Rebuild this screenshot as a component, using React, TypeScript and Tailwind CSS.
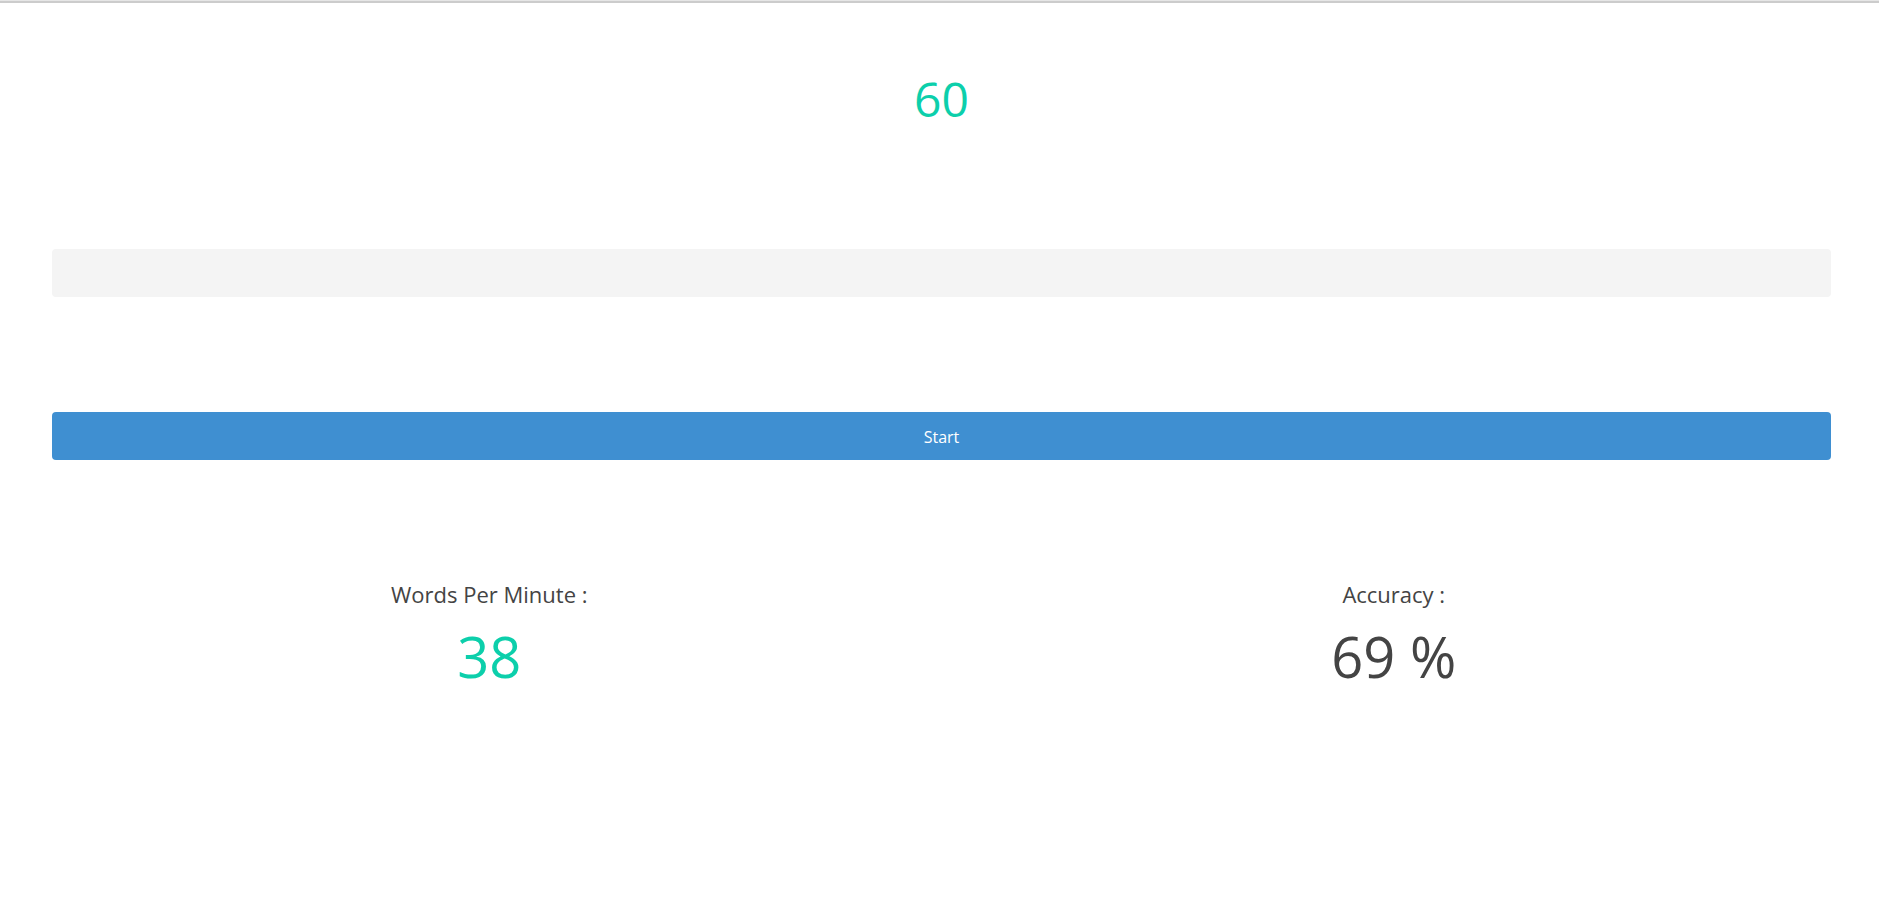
import React from 'react'

function Stat({ label, value, accent }: { label: string; value: string; accent?: boolean }) {
  return (
    <div className="flex flex-col items-center">
      <p className="text-[22px] leading-none text-[#444444]">{label}</p>
      <p className={`mt-[23px] text-[56px] leading-none ${accent ? 'text-[#0ccfab]' : 'text-[#444444]'}`}>
        {value}
      </p>
    </div>
  )
}

export default function App() {
  return (
    <div className="min-h-[901px] bg-white font-['Open_Sans',sans-serif]">
      <div className="h-[1px] bg-[#e6e6e6]" />
      <div className="h-[2px] bg-[#cccccc]" />
      <main className="pl-[52px] pr-[48px] flex flex-col">
        <p className="mt-[72px] text-center text-[48px] leading-none text-[#0ccfab]">60</p>
        <input
          className="mt-[126px] h-[48px] w-full rounded bg-[#f4f4f4] px-4 outline-none"
          type="text"
        />
        <button className="mt-[115px] h-[48px] w-full rounded bg-[#3f8fd1] pt-[2px] text-[16px] text-white">
          Start
        </button>
        <section className="mt-[123px] grid grid-cols-2 gap-[30px]">
          <Stat label="Words Per Minute :" value="38" accent />
          <Stat label="Accuracy :" value="69 %" />
        </section>
      </main>
    </div>
  )
}
